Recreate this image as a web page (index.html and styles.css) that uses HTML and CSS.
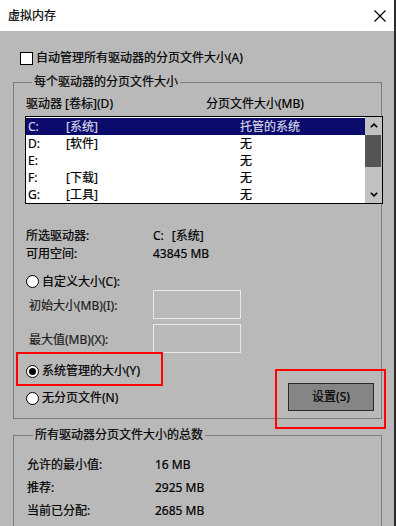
FILE: index.html
```html
<!DOCTYPE html>
<html lang="zh-CN">

<head>
  <meta charset="UTF-8">
  <meta name="viewport" content="width=device-width, initial-scale=1.0">
  <title>虚拟内存</title>

  <link rel="stylesheet" href="styles.css">
</head>

<body>
  <div class="window">
    <div class="titlebar">
      <span class="title">虚拟内存</span>
      <svg class="close" width="12" height="12" viewBox="0 0 12 12">
        <path d="M0.5 0.5 L11.5 11.5 M11.5 0.5 L0.5 11.5" stroke="#000" stroke-width="1.2" fill="none" />
      </svg>
    </div>

    <div class="panel">
      <div class="check-row">
        <span class="checkbox"></span>
        <span>自动管理所有驱动器的分页文件大小(A)</span>
      </div>

      <fieldset class="group drives">
        <legend>每个驱动器的分页文件大小</legend>

        <div class="cols-head">
          <span class="head-drive">驱动器 [卷标](D)</span>
          <span>分页文件大小(MB)</span>
        </div>

        <div class="listbox">
          <ul class="rows">
            <li class="row selected"><span class="c1">C:</span><span class="c2">[系统]</span><span>托管的系统</span></li>
            <li class="row"><span class="c1">D:</span><span class="c2">[软件]</span><span>无</span></li>
            <li class="row"><span class="c1">E:</span><span class="c2"></span><span>无</span></li>
            <li class="row"><span class="c1">F:</span><span class="c2">[下载]</span><span>无</span></li>
            <li class="row"><span class="c1">G:</span><span class="c2">[工具]</span><span>无</span></li>
          </ul>
          <div class="scrollbar">
            <span class="arrow">
              <svg width="8" height="5" viewBox="0 0 8 5"><path d="M0.8 4.3 L4 1.1 L7.2 4.3" stroke="#000" stroke-width="1.6" fill="none" /></svg>
            </span>
            <span class="thumb"></span>
            <span class="track"></span>
            <span class="arrow">
              <svg width="8" height="5" viewBox="0 0 8 5"><path d="M0.8 0.7 L4 3.9 L7.2 0.7" stroke="#000" stroke-width="1.6" fill="none" /></svg>
            </span>
          </div>
        </div>

        <div class="info">
          <div class="info-row"><span class="info-label">所选驱动器:</span><span>C:</span><span class="vol">[系统]</span></div>
          <div class="info-row"><span class="info-label">可用空间:</span><span>43845 MB</span></div>
        </div>

        <div class="radio-row custom"><span class="radio"></span>自定义大小(C):</div>

        <div class="size-rows">
          <div class="size-row"><span class="size-label">初始大小(MB)(I):</span><span class="field"></span></div>
          <div class="size-row"><span class="size-label">最大值(MB)(X):</span><span class="field"></span></div>
        </div>

        <div class="bottom">
          <div class="radios">
            <div class="radio-row"><span class="radio checked"></span>系统管理的大小(Y)</div>
            <div class="radio-row"><span class="radio"></span>无分页文件(N)</div>
          </div>
          <button class="set-btn">设置(S)</button>
        </div>
      </fieldset>

      <fieldset class="group totals">
        <legend>所有驱动器分页文件大小的总数</legend>
        <div class="total-row"><span class="total-label">允许的最小值:</span><span>16 MB</span></div>
        <div class="total-row"><span class="total-label">推荐:</span><span>2925 MB</span></div>
        <div class="total-row"><span class="total-label">当前已分配:</span><span>2685 MB</span></div>
      </fieldset>
    </div>

    <!-- annotation boxes -->
    <div class="mark mark-radio"></div>
    <div class="mark mark-btn"></div>
  </div>
</body>

</html>
```

FILE: styles.css
```css
html,
body {
  padding: 0;
  margin: 0;
  overflow: hidden;
  width: 396px;
  height: 526px;
  background-color: #2b2b2b;
}

.window {
  position: relative;
  width: 394px;
  height: 526px;
  font-family: "Noto Sans", "Noto Sans CJK SC", sans-serif;
  font-size: 12px;
  line-height: 16px;
  color: #000;
  -webkit-text-stroke: 0.2px currentColor;
}

.titlebar {
  height: 31px;
  background-color: #fff;
  display: flex;
  align-items: center;
  justify-content: space-between;
  padding: 0 8px 0 8px;
  box-sizing: border-box;
}

.panel {
  height: 495px;
  background-color: #b9b9b9;
  overflow: hidden;
}

.check-row {
  display: flex;
  align-items: center;
  gap: 3px;
  height: 16px;
  margin-top: 19px;
  padding-left: 20px;
}

.checkbox {
  width: 13px;
  height: 13px;
  box-sizing: border-box;
  border: 1px solid #000;
  background-color: #fff;
}

.group {
  margin: 0 0 0 13px;
  width: 369px;
  box-sizing: border-box;
  border: 1px solid #7c7c7c;
  padding: 0;
  min-inline-size: 0;
}

.group legend {
  padding: 0 2px;
  margin-left: 6px;
  line-height: 16px;
}

.drives {
  margin-top: 8px;
  padding: 0 0 7px 12px;
}

.cols-head {
  display: flex;
  height: 16px;
  margin-top: 6px;
}

.head-drive {
  width: 180px;
}

.listbox {
  display: flex;
  width: 358px;
  height: 88px;
  margin: 4px 0 0 -1px;
  box-sizing: border-box;
  border: 1px solid #000;
  background-color: #fff;
}

.rows {
  list-style: none;
  margin: 0;
  padding: 1px 0 0 0;
  width: 339px;
}

.row {
  display: flex;
  height: 17px;
  line-height: 17px;
  padding-left: 2px;
}

.row.selected {
  background-color: #0b0b6b;
  color: #d4d4e6;
}

.c1 {
  width: 38px;
}

.c2 {
  width: 174px;
}

.scrollbar {
  width: 17px;
  display: flex;
  flex-direction: column;
  background-color: #c2c2c2;
}

.arrow {
  height: 17px;
  display: flex;
  align-items: center;
  justify-content: center;
}

.thumb {
  height: 32px;
  margin: 1px 1px 0 0;
  background-color: #555;
}

.track {
  flex: 1;
}

.info {
  margin-top: 23px;
}

.info-row,
.total-row {
  display: flex;
  height: 18px;
  line-height: 18px;
}

.info-label {
  width: 127px;
}

.vol {
  margin-left: 8px;
}

.radio-row {
  display: flex;
  align-items: center;
  gap: 3px;
  height: 18px;
}

.radio-row.custom {
  margin-top: 10px;
  height: 17px;
}

.radio {
  width: 13px;
  height: 13px;
  box-sizing: border-box;
  border: 1px solid #000;
  border-radius: 50%;
  background-color: #fff;
  display: flex;
  align-items: center;
  justify-content: center;
}

.radio.checked::after {
  content: "";
  width: 7px;
  height: 7px;
  border-radius: 50%;
  background-color: #000;
}

.size-rows {
  display: flex;
  flex-direction: column;
  gap: 5px;
}

.size-row {
  display: flex;
  height: 29px;
}

.size-label {
  width: 124px;
  padding: 8px 0 0 3px;
  line-height: 16px;
  color: #1e1e1e;
}

.field {
  width: 88px;
  height: 29px;
  box-sizing: border-box;
  border: 1px solid #e9e9e9;
}

.bottom {
  display: flex;
  margin-top: 9px;
}

.radios {
  display: flex;
  flex-direction: column;
  gap: 9px;
}

.set-btn {
  margin: 21px 7px 0 auto;
  width: 86px;
  height: 28px;
  box-sizing: border-box;
  border: 1px solid #2a2a2a;
  background-color: #858585;
  font: inherit;
  color: #000;
  padding: 0;
}

.totals {
  margin-top: 8px;
  height: 200px;
  padding: 13px 0 0 13px;
}

.totals .total-row + .total-row {
  margin-top: 5px;
}

.total-label {
  width: 128px;
}

.mark {
  position: absolute;
  box-sizing: border-box;
  border: 2px solid #f00;
}

.mark-radio {
  left: 16px;
  top: 352px;
  width: 147px;
  height: 34px;
}

.mark-btn {
  left: 275px;
  top: 369px;
  width: 111px;
  height: 60px;
}
```
